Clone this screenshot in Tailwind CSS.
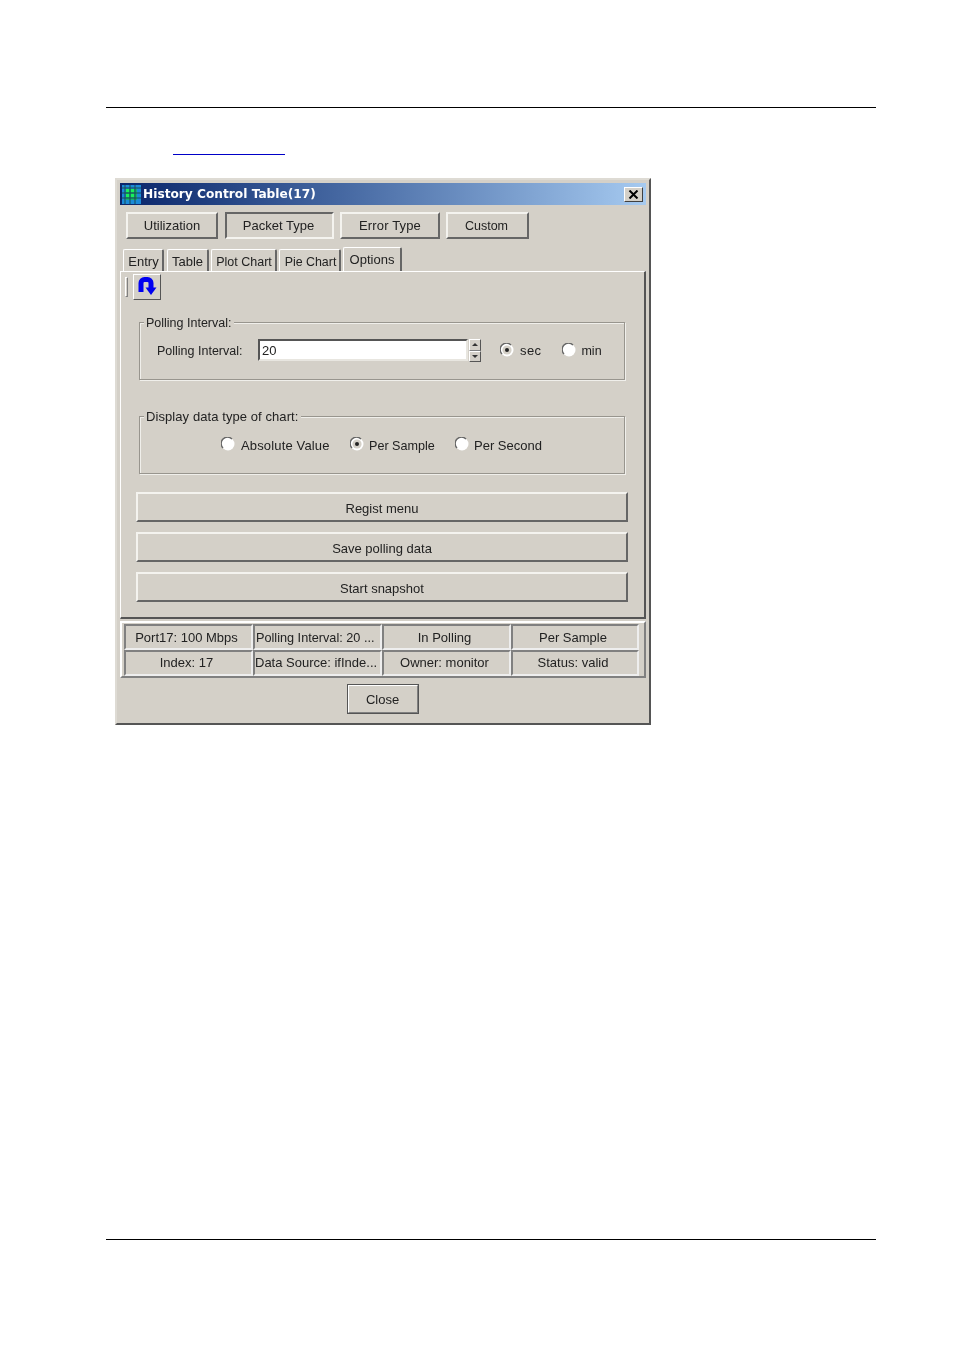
<!DOCTYPE html>
<html lang="en">
<head>
  <meta charset="UTF-8" />
  <title>History Control Table</title>
  <script src="https://cdn.jsdelivr.net/npm/@tailwindcss/browser@4"></script>
</head>
<body class="bg-white h-[1350px] overflow-hidden pt-[107px] font-['Liberation_Sans',Arial,sans-serif] text-[13px] text-[#222]">

  <div class="ml-[106px] w-[770px] h-px bg-black"></div>
  <div class="ml-[173px] mt-[46px] w-[112px] h-px bg-[#0000c8]"></div>

  <!-- window -->
  <div class="ml-[115px] mt-[23px] w-[536px] h-[547px] bg-[#d4d0c8] border-2 border-t-[#dedbd4] border-l-[#dedbd4] border-r-[#555] border-b-[#555] p-[3px] blur-[0.5px]">

    <div class="h-[22px] flex items-center bg-gradient-to-r from-[#0a246a] to-[#a6caf0] pl-[2px]">
      <svg width="19" height="19" viewBox="0 0 19 19">
        <rect width="19" height="19" fill="#1a8ad8"/>
        <rect x="4" y="4" width="11" height="11" fill="#14b070"/>
        <path d="M0 3h19M0 8h19M0 13h19M3 0v19M8 0v19M13 0v19" stroke="#1a4a50" stroke-width="1"/>
        <path d="M5.5 5.5h0M10.5 5.5h0M5.5 10.5h0M10.5 10.5h0" stroke="#19f05a" stroke-width="3" stroke-linecap="square"/>
      </svg>
      <span class="ml-[2px] font-['DejaVu_Sans',sans-serif] font-bold text-[12.2px] text-white leading-none">History Control Table(17)</span>
      <div class="ml-auto mr-[3px] w-[19px] h-[15px] flex items-center justify-center bg-[#d4d0c8] border border-t-white border-l-white border-r-[#404040] border-b-[#404040]">
        <svg width="11" height="9" viewBox="0 0 11 9"><path d="M1.5 0.5l8 8M9.5 0.5l-8 8" stroke="#000" stroke-width="2"/></svg>
      </div>
    </div>

    <!-- view buttons -->
    <div class="flex mt-[7px] ml-[6px]">
      <div class="w-[92px] h-[27px] pt-px flex items-center justify-center border-2 border-t-[#f4f3ef] border-l-[#f4f3ef] border-r-[#666] border-b-[#666]">Utilization</div>
      <div class="ml-[7px] w-[109px] h-[27px] pt-px pr-[2px] flex items-center justify-center border-2 border-t-[#666] border-l-[#666] border-r-[#f4f3ef] border-b-[#f4f3ef]">Packet Type</div>
      <div class="ml-[6px] w-[100px] h-[27px] pt-px flex items-center justify-center border-2 border-t-[#f4f3ef] border-l-[#f4f3ef] border-r-[#666] border-b-[#666] tracking-[0.15px]">Error Type</div>
      <div class="ml-[6px] w-[83px] h-[27px] pt-px pr-[2px] flex items-center justify-center border-2 border-t-[#f4f3ef] border-l-[#f4f3ef] border-r-[#666] border-b-[#666] text-[12.5px]">Custom</div>
    </div>

    <!-- tabs -->
    <div class="flex items-end h-[24px] mt-[8px] ml-[3px]">
      <div class="w-[41px] h-[22px] pt-[3px] pl-px flex items-center justify-center rounded-t-[2px] border-t border-l border-r-2 border-t-white border-l-white border-r-[#666]">Entry</div>
      <div class="ml-[3px] w-[42px] h-[22px] pt-[3px] flex items-center justify-center rounded-t-[2px] border-t border-l border-r-2 border-t-white border-l-white border-r-[#666]">Table</div>
      <div class="ml-[2px] w-[66px] h-[22px] pt-[3px] pl-px flex items-center justify-center rounded-t-[2px] border-t border-l border-r-2 border-t-white border-l-white border-r-[#666] text-[12.5px]">Plot Chart</div>
      <div class="ml-[2px] w-[62px] h-[22px] pt-[3px] pl-[2px] flex items-center justify-center rounded-t-[2px] border-t border-l border-r-2 border-t-white border-l-white border-r-[#666] text-[12.4px]">Pie Chart</div>
      <div class="ml-[2px] w-[59px] h-[24px] flex items-center justify-center rounded-t-[2px] border-t border-l border-r-2 border-t-white border-l-white border-r-[#666]">Options</div>
    </div>

    <!-- options panel -->
    <div class="h-[348px] border-t border-l border-r-2 border-b-2 border-t-white border-l-white border-r-[#555] border-b-[#555]">
      <div class="flex items-center mt-[2px] ml-[4px]">
        <div class="w-[3px] h-[20px] border border-t-white border-l-white border-r-[#808080] border-b-[#808080]"></div>
        <div class="ml-[5px] w-[28px] h-[26px] flex items-center justify-center border border-t-white border-l-white border-r-[#555] border-b-[#555]">
          <svg width="20" height="20" viewBox="0 0 20 20">
            <path d="M4 15V6a3.5 3.5 0 0 1 3.5-3.5h3a3.5 3.5 0 0 1 3.5 3.5V12" fill="none" stroke="#0000f0" stroke-width="5"/>
            <path d="M8.5 10.5h11l-5.5 7.5z" fill="#0000f0"/>
          </svg>
        </div>
      </div>

      <div class="relative ml-[18px] mt-[22px] w-[486px] h-[58px] border border-[#98958e] shadow-[inset_1px_1px_0_#f0efeb,1px_1px_0_#f0efeb]">
        <span class="absolute left-[4px] top-[-8px] pl-[2px] pr-[3px] bg-[#d4d0c8] leading-[16px] text-[12.5px]">Polling Interval:</span>
        <div class="flex items-center h-[22px] mt-[16px] pl-[17px]">
          <span class="w-[101px] pt-[2px] text-[12.5px] whitespace-nowrap">Polling Interval:</span>
          <div class="w-[210px] h-[22px] pl-[2px] pt-[2px] flex items-center bg-white border-2 border-t-[#555] border-l-[#555] border-r-[#e8e6e0] border-b-[#e8e6e0]">20</div>
          <div class="ml-[1px] w-[12px] h-[23px] flex flex-col">
            <div class="h-[12px] flex items-center justify-center border border-t-white border-l-white border-r-[#555] border-b-[#808080]"><div class="w-0 h-0 border-x-[3px] border-x-transparent border-b-[3px] border-b-[#333]"></div></div>
            <div class="h-[11px] flex items-center justify-center border border-t-white border-l-white border-r-[#555] border-b-[#555]"><div class="w-0 h-0 border-x-[3px] border-x-transparent border-t-[3px] border-t-[#333]"></div></div>
          </div>
          <svg class="ml-[19px]" width="14" height="14" viewBox="0 0 14 14"><circle cx="7" cy="7" r="6.5" fill="#fff"/><path d="M2 11A6 6 0 0 1 11 2" fill="none" stroke="#666" stroke-width="1.4"/><circle cx="7" cy="7" r="4.6" fill="#d4d0c8"/><circle cx="7" cy="7" r="2" fill="#222"/></svg>
          <span class="ml-[6px] pt-[2px] tracking-[0.4px]">sec</span>
          <svg class="ml-[21px]" width="14" height="14" viewBox="0 0 14 14"><circle cx="7" cy="7" r="6.5" fill="#fff"/><path d="M2 11A6 6 0 0 1 11 2" fill="none" stroke="#666" stroke-width="1.4"/></svg>
          <span class="ml-[5px] pt-[2px] text-[12.5px]">min</span>
        </div>
      </div>

      <div class="relative ml-[18px] mt-[36px] w-[486px] h-[58px] border border-[#98958e] shadow-[inset_1px_1px_0_#f0efeb,1px_1px_0_#f0efeb]">
        <span class="absolute left-[4px] top-[-8px] pl-[2px] pr-[3px] bg-[#d4d0c8] leading-[16px] tracking-[0.08px] whitespace-nowrap">Display data type of chart:</span>
        <div class="flex items-center h-[22px] mt-[17px] pl-[81px]">
          <svg class="mb-[2px] shrink-0" width="14" height="14" viewBox="0 0 14 14"><circle cx="7" cy="7" r="6.5" fill="#fff"/><path d="M2 11A6 6 0 0 1 11 2" fill="none" stroke="#666" stroke-width="1.4"/></svg>
          <span class="ml-[6px] w-[89px] pt-px tracking-[0.15px] whitespace-nowrap">Absolute Value</span>
          <svg class="ml-[20px] mb-[2px] shrink-0" width="14" height="14" viewBox="0 0 14 14"><circle cx="7" cy="7" r="6.5" fill="#fff"/><path d="M2 11A6 6 0 0 1 11 2" fill="none" stroke="#666" stroke-width="1.4"/><circle cx="7" cy="7" r="4.6" fill="#d4d0c8"/><circle cx="7" cy="7" r="2" fill="#222"/></svg>
          <span class="ml-[5px] w-[66px] pt-[3px] text-[12.6px] whitespace-nowrap">Per Sample</span>
          <svg class="ml-[20px] mb-[2px] shrink-0" width="14" height="14" viewBox="0 0 14 14"><circle cx="7" cy="7" r="6.5" fill="#fff"/><path d="M2 11A6 6 0 0 1 11 2" fill="none" stroke="#666" stroke-width="1.4"/></svg>
          <span class="ml-[5px] pt-px whitespace-nowrap">Per Second</span>
        </div>
      </div>

      <div class="ml-[15px] mt-[18px] w-[492px] flex flex-col gap-[10px]">
        <div class="h-[30px] pt-[3px] flex items-center justify-center border-2 border-t-[#f4f3ef] border-l-[#f4f3ef] border-r-[#666] border-b-[#666]">Regist menu</div>
        <div class="h-[30px] pt-[3px] flex items-center justify-center border-2 border-t-[#f4f3ef] border-l-[#f4f3ef] border-r-[#666] border-b-[#666]">Save polling data</div>
        <div class="h-[30px] pt-[3px] flex items-center justify-center border-2 border-t-[#f4f3ef] border-l-[#f4f3ef] border-r-[#666] border-b-[#666]">Start snapshot</div>
      </div>
    </div>

    <!-- status table -->
    <div class="mt-[2px] h-[57px] pt-px pl-[2px] border-2 border-t-white border-l-white border-r-[#808080] border-b-[#808080]">
      <div class="grid grid-cols-[129px_129px_129px_128px] grid-rows-[26px_26px]">
        <div class="flex items-center justify-center pt-px pr-[4px] border-2 border-t-[#808080] border-l-[#808080] border-r-[#eee] border-b-[#eee]">Port17: 100 Mbps</div>
        <div class="flex items-center pl-px pt-[3px] border-2 border-t-[#808080] border-l-[#808080] border-r-[#eee] border-b-[#eee] whitespace-nowrap text-[12.7px]">Polling Interval: 20 ...</div>
        <div class="flex items-center justify-center pt-px pr-[4px] border-2 border-t-[#808080] border-l-[#808080] border-r-[#eee] border-b-[#eee]">In Polling</div>
        <div class="flex items-center justify-center pt-px pr-[4px] border-2 border-t-[#808080] border-l-[#808080] border-r-[#eee] border-b-[#eee]">Per Sample</div>
        <div class="flex items-center justify-center pr-[4px] border-2 border-t-[#808080] border-l-[#808080] border-r-[#eee] border-b-[#eee]">Index: 17</div>
        <div class="flex items-center border-2 border-t-[#808080] border-l-[#808080] border-r-[#eee] border-b-[#eee] whitespace-nowrap">Data Source: ifInde...</div>
        <div class="flex items-center justify-center pr-[4px] border-2 border-t-[#808080] border-l-[#808080] border-r-[#eee] border-b-[#eee]">Owner: monitor</div>
        <div class="flex items-center justify-center pr-[4px] border-2 border-t-[#808080] border-l-[#808080] border-r-[#eee] border-b-[#eee]">Status: valid</div>
      </div>
    </div>

    <div class="ml-[227px] mt-[6px] w-[72px] h-[30px] border border-[#555]">
      <div class="h-full pt-px pr-px flex items-center justify-center border border-t-white border-l-white border-r-[#808080] border-b-[#808080]">Close</div>
    </div>
  </div>

  <div class="ml-[106px] mt-[514px] w-[770px] h-px bg-black"></div>
</body>
</html>
